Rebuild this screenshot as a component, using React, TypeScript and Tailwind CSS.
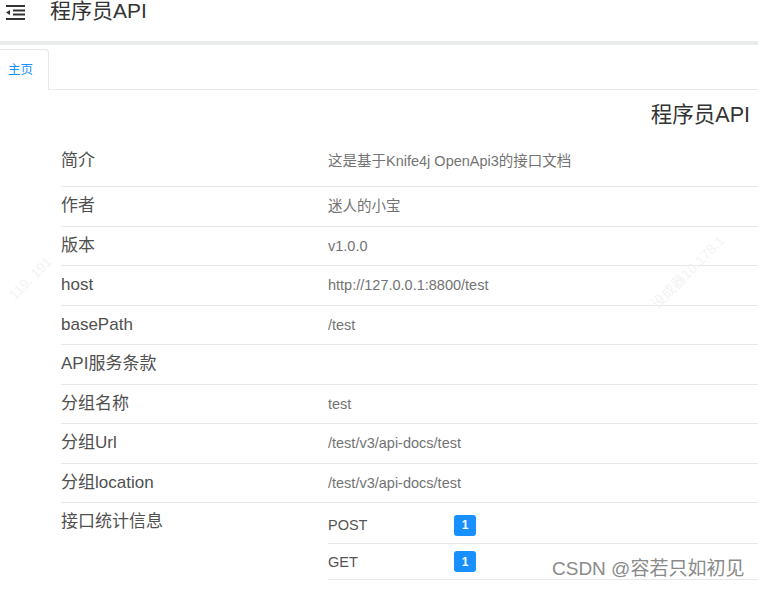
import React from 'react';

const FONT = { fontFamily: '"Liberation Sans", Arial, "Noto Sans CJK SC", sans-serif' };

type Row = { label: string; value?: string };

const rows: Row[] = [
  { label: '作者', value: '迷人的小宝' },
  { label: '版本', value: 'v1.0.0' },
  { label: 'host', value: 'http://127.0.0.1:8800/test' },
  { label: 'basePath', value: '/test' },
  { label: 'API服务条款' },
  { label: '分组名称', value: 'test' },
  { label: '分组Url', value: '/test/v3/api-docs/test' },
  { label: '分组location', value: '/test/v3/api-docs/test' },
];

const stats = [
  { method: 'POST', count: 1 },
  { method: 'GET', count: 1 },
];

const MenuFoldIcon = () => (
  <svg width="20" height="17" viewBox="0 0 20 17" fill="none">
    <rect x="1" y="2" width="19" height="2" fill="#333" />
    <rect x="8" y="6.5" width="12" height="2" fill="#333" />
    <rect x="8" y="10.5" width="12" height="2" fill="#333" />
    <rect x="1" y="15" width="19" height="2" fill="#333" />
    <path d="M1 9.5 L5 7 L5 12 Z" fill="#333" />
  </svg>
);

const InfoRow = ({ label, value, tall }: Row & { tall?: boolean }) => (
  <div className={`flex items-start border-b border-[#e8e8e8] ${tall ? 'h-[46px] pt-[9px]' : 'h-[39.5px] pt-[8px]'}`}>
    <div className="w-[267px] shrink-0 text-[17px] leading-[22px] text-[#505050]">{label}</div>
    <div className="text-[14.5px] leading-[22px] text-[#737373]">{value}</div>
  </div>
);

export default function App() {
  return (
    <div className="relative w-[758px] h-[590px] overflow-hidden bg-white" style={FONT}>
      {/* top bar */}
      <div className="h-[41px]">
        <div className="flex items-center h-[21px]">
          <div className="pl-[5px] pt-[1px]">
            <MenuFoldIcon />
          </div>
          <div className="ml-[25px] text-[21px] leading-[21px] text-[#333]">程序员API</div>
        </div>
      </div>
      <div className="h-[4px] bg-[#e9eaec]" />

      {/* tabs */}
      <div className="flex pt-[4px]">
        <div className="w-[49px] h-[41px] border border-b-0 border-l-0 border-[#e8e8e8] rounded-tr-[4px] flex items-center pl-[8px] text-[12.5px] text-[#1890ff]">
          主页
        </div>
        <div className="flex-1 border-b border-[#e8e8e8]" />
      </div>

      {/* document info */}
      <div className="pl-[61px]">
        <div className="flex justify-end pr-[8px] pt-[12px] text-[21.5px] leading-[26px] text-[#333]">程序员API</div>
        <div className="mt-[13px]">
          <InfoRow label="简介" value="这是基于Knife4j OpenApi3的接口文档" tall />
          {rows.map((r) => (
            <InfoRow key={r.label} label={r.label} value={r.value} />
          ))}
          <div className="flex items-start">
            <div className="w-[267px] shrink-0 pt-[8px] text-[17px] leading-[22px] text-[#505050]">接口统计信息</div>
            <div className="flex-1 pt-[4px]">
              {stats.map((s, i) => (
                <div
                  key={s.method}
                  className={`flex items-center border-b border-[#e8e8e8] ${i === 0 ? 'h-[37px]' : 'h-[36px]'}`}
                >
                  <div className="w-[126px] pt-[2px] text-[14.5px] text-[#555]">{s.method}</div>
                  <div className="w-[22px] h-[21px] rounded-[3px] bg-[#1890ff] flex items-center justify-center text-[12px] font-bold text-white">
                    {s.count}
                  </div>
                </div>
              ))}
            </div>
          </div>
        </div>
      </div>

      {/* faint watermarks */}
      <div className="absolute left-[4px] top-[268px] -rotate-45 text-[14px] text-[#f3f3f3] pointer-events-none">119. 191</div>
      <div className="absolute left-[640px] top-[262px] -rotate-45 text-[14px] text-[#f3f3f3] pointer-events-none">设成器10.178.1</div>

      {/* CSDN mark */}
      <div
        className="absolute left-[552px] top-[557px] text-[19px] leading-[24px] text-[#8a8a8a] pointer-events-none"
        style={{ textShadow: '0 0 2px #fff, 0 0 2px #fff' }}
      >
        CSDN @容若只如初见
      </div>
    </div>
  );
}
